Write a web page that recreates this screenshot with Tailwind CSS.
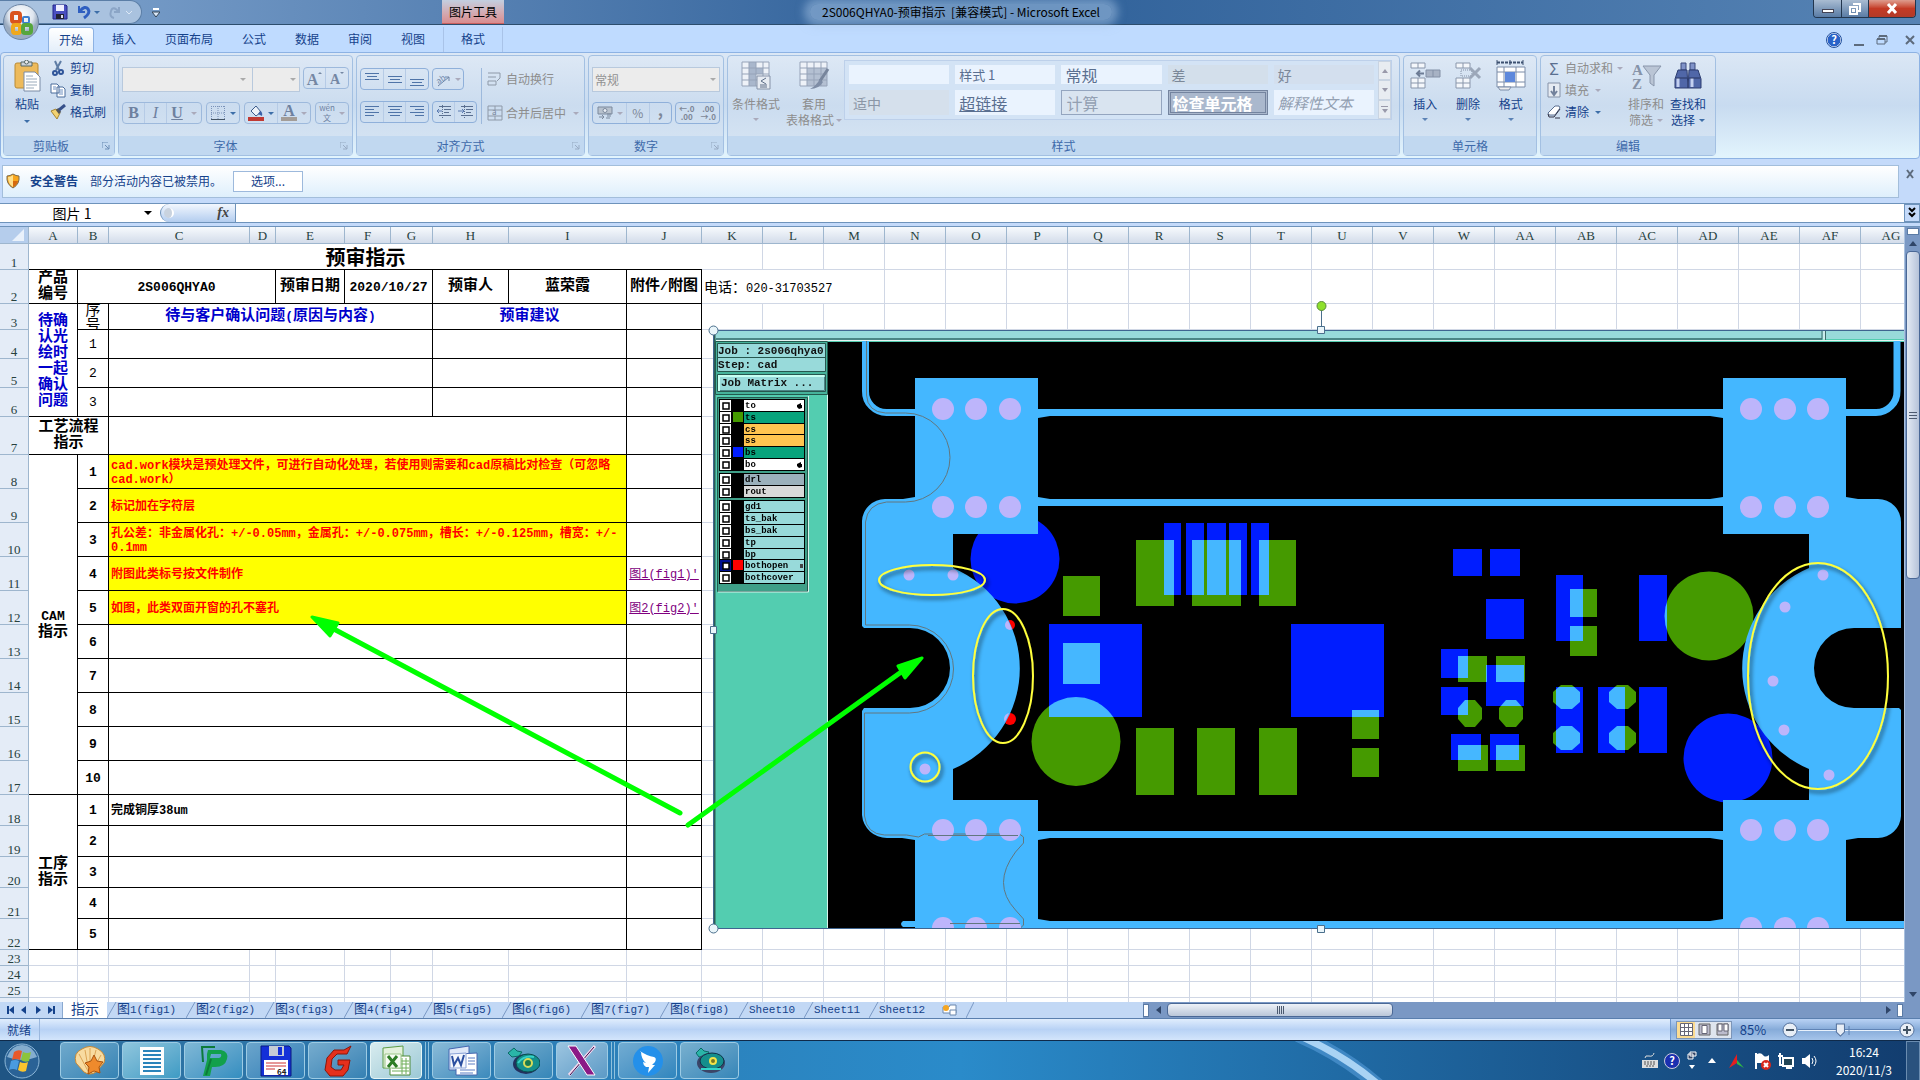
<!DOCTYPE html>
<html lang="zh-CN">
<head>
  <meta charset="UTF-8" />
  <meta name="viewport" content="width=device-width, initial-scale=1.0" />
  <title>2S006QHYA0-预审指示 [兼容模式] - Microsoft Excel</title>
  <script src="https://cdn.jsdelivr.net/npm/@tailwindcss/browser@4"></script>
</head>
<body class="h-screen overflow-hidden flex flex-col bg-[#c4dafa] font-['Noto_Sans_CJK_SC',sans-serif] text-xs leading-4 text-[#15428b] whitespace-nowrap">

  <!-- title bar -->
  <header class="relative h-[25px] shrink-0 flex bg-linear-to-r from-[#7fa3cd] via-[#2d5f98] to-[#5683b4] border-b border-[#2c4d6d]">
    <div class="flex items-center gap-2 w-[142px] pl-[52px] bg-[#a9c2df] border-y border-r border-[#5b7ea6] rounded-r-full">
      <button aria-label="保存"><svg class="size-4" viewBox="0 0 16 16"><path d="M1 1h13l1 1v13H1z" fill="#4a4fc0" stroke="#22258a"/><path d="M4 1h8v6H4z" fill="#eef"/><path d="M4 10h8v5H4z" fill="#223"/><path d="M9 11h2v3H9z" fill="#dde"/></svg></button>
      <button aria-label="撤消"><svg class="w-6 h-4" viewBox="0 0 24 16"><path d="M3 2v6h6" fill="none" stroke="#2f5fc0" stroke-width="2"/><path d="M4 7q5-6 8-2t-4 9" fill="none" stroke="#2f5fc0" stroke-width="3"/><path d="M18 7h6l-3 3z" fill="#3d6ea8"/></svg></button>
      <button aria-label="重复"><svg class="w-6 h-4" viewBox="0 0 24 16"><path d="M11 3v5H6M11 8Q5 1 3 7t3 7" fill="none" stroke="#8ba5c6" stroke-width="2"/><path d="M18 7l3 3 3-3" fill="none" stroke="#dce8f6"/></svg></button>
    </div>
    <button class="ml-1 w-5 flex items-center justify-center" aria-label="自定义快速访问工具栏"><svg class="w-2 h-3" viewBox="0 0 8 12"><path d="M1 3h6" stroke="#fff" stroke-width="2"/><path d="M0 6h8L4 11z" fill="#dce9f8" stroke="#345"/></svg></button>
    <div class="w-[276px]"></div>
    <div class="w-[62px] flex items-center justify-center bg-linear-to-b from-[#c3cfe0] to-[#d98c8f] border-b border-[#c9605f] text-black">图片工具</div>
    <h1 class="flex-1 flex items-center justify-center text-black pr-[502px]"><span class="px-3 rounded-full bg-[#a9c8e8]/50 shadow-[0_0_8px_6px_rgba(169,200,232,0.5)] whitespace-pre">2S006QHYA0-预审指示  [兼容模式] - Microsoft Excel</span></h1>
    <div class="absolute right-1 top-0 h-[18px] flex border border-t-0 border-[#22364e] rounded-b overflow-hidden">
      <button class="w-7 flex items-end justify-center pb-1 bg-linear-to-b from-[#a9bcd2] to-[#5a7ca5] border-r border-[#22364e]" aria-label="最小化"><span class="w-3 h-1 bg-white border border-[#445]"></span></button>
      <button class="w-[27px] flex items-center justify-center bg-linear-to-b from-[#a9bcd2] to-[#5a7ca5] border-r border-[#22364e]" aria-label="还原"><svg class="w-3 h-3" viewBox="0 0 12 12"><path d="M4 1h7v7H9M1 4h7v7H1zM4 7h1v1H4z" fill="none" stroke="#fff" stroke-width="2"/></svg></button>
      <button class="w-[46px] flex items-center justify-center bg-linear-to-b from-[#dd9c8e] via-[#c43a25] to-[#b23a28]" aria-label="关闭"><svg class="w-3 h-3" viewBox="0 0 12 12"><path d="M2 1l8 9M10 1L2 10" stroke="#fff" stroke-width="3"/></svg></button>
    </div>
    <button class="absolute left-[3px] top-[4px] z-10" aria-label="Office 按钮">
      <svg class="size-[37px]" viewBox="0 0 37 37">
        <defs><radialGradient id="orb" cy=".3"><stop offset="0" stop-color="#fff"/><stop offset=".7" stop-color="#dfe6ef"/><stop offset="1" stop-color="#9aabc0"/></radialGradient></defs>
        <circle cx="18" cy="18" r="17.500" fill="url(#orb)" stroke="#6b84a4"/>
        <g fill="none" stroke-width="4"><rect x="9" y="9" width="8" height="9" rx="2" stroke="#d9531e"/><rect x="20" y="13" width="6" height="6" rx="1" stroke="#3b7fd0" stroke-width="2"/><rect x="10" y="21" width="7" height="8" rx="2" stroke="#f0a81c"/><rect x="20" y="21" width="8" height="8" rx="2" stroke="#56a63c"/></g>
      </svg>
    </button>
  </header>

  <!-- ribbon tabs -->
  <nav class="h-[27px] shrink-0 flex items-end gap-[7px] pl-12 pr-1 bg-[#bfdbff] leading-6">
    <a href="#" class="px-[10px] h-[25px] bg-linear-to-b from-white to-[#e3eefa] border border-b-0 border-[#8db2e3] rounded-t">开始</a>
    <a href="#" class="px-[11px] h-[25px]">插入</a>
    <a href="#" class="px-[11px] h-[25px]">页面布局</a>
    <a href="#" class="px-[11px] h-[25px]">公式</a>
    <a href="#" class="px-[11px] h-[25px]">数据</a>
    <a href="#" class="px-[11px] h-[25px]">审阅</a>
    <a href="#" class="px-[11px] h-[25px]">视图</a>
    <a href="#" class="px-[17px] h-[25px] border-x border-[#a9c3e8]">格式</a>
    <div class="ml-auto h-[25px] flex items-center gap-3">
      <button aria-label="帮助"><svg class="size-4" viewBox="0 0 16 16"><circle cx="8" cy="8" r="7" fill="#2a63c8" stroke="#fff"/><circle cx="8" cy="8" r="7.500" fill="none" stroke="#1f4e9c"/><text x="8" y="12" text-anchor="middle" font-size="11" font-weight="700" fill="#fff">?</text></svg></button>
      <button class="w-[10px] h-3 border-b-2 border-[#5d6b7c]" aria-label="最小化窗口"></button>
      <button aria-label="还原窗口"><svg class="size-3" viewBox="0 0 12 12"><path d="M1 5h8v5H1zM3 5V2h8v6H9" fill="none" stroke="#5d6b7c"/><path d="M1 5h8M3 2h8" stroke="#5d6b7c" stroke-width="2"/></svg></button>
      <button class="ml-1" aria-label="关闭窗口"><svg class="size-3" viewBox="0 0 12 12"><path d="M2 2l8 8M10 2l-8 8" stroke="#5d6b7c" stroke-width="2"/></svg></button>
    </div>
  </nav>

  <!-- ribbon -->
  <section class="h-[107px] shrink-0 flex gap-[3px] p-[2px] bg-linear-to-b from-[#dbe7f5] via-[#c8dbf0] to-[#e2f4fd] border border-[#8db2e3] rounded">

    <div class="w-28 flex flex-col border border-[#a3c0e2] rounded bg-linear-to-b from-[#dde8f5] via-[#cbdcef] to-[#d8e6f4]">
      <div class="flex-1 flex px-2">
        <button class="w-8 flex flex-col items-center pt-1">
          <svg class="w-7 h-8" viewBox="0 0 28 32"><rect x="2" y="3" width="23" height="25" rx="2" fill="#edba5b" stroke="#b98a35"/><path d="M8 2h11v4H8z" fill="#ccd3da" stroke="#566"/><circle cx="13.500" cy="2" r="2" fill="#eee" stroke="#566"/><path d="M11 12h11l5 5v14H11z" fill="#fff" stroke="#7b8ca5"/><path d="M13 16h7M13 19h11M13 22h11M13 25h11M13 28h8" stroke="#9ab"/></svg>
          <span class="mt-1">粘贴</span>
          <span class="mt-2 border-x-[3px] border-x-transparent border-t-[3px] border-t-[#3d6ea8]"></span>
        </button>
        <div class="flex flex-col pt-px pl-2">
          <button class="h-[22px] flex items-center gap-1"><svg class="w-4 h-4" viewBox="0 0 16 16"><path d="M5 1l4 9M11 1L6 10" stroke="#5f7da5" stroke-width="2"/><circle cx="5" cy="13" r="2" fill="none" stroke="#2f559a" stroke-width="2"/><circle cx="11" cy="12" r="2" fill="none" stroke="#2f559a" stroke-width="2"/></svg>剪切</button>
          <button class="h-[22px] flex items-center gap-1"><svg class="w-4 h-4" viewBox="0 0 16 16"><path d="M1 2h6l2 2v7H1zM7 5h6l2 2v8H7z" fill="#fff" stroke="#4a6c9b"/><path d="M3 5h3M3 7h3M9 8h4M9 10h4M9 12h4" stroke="#6d8fc0"/></svg>复制</button>
          <button class="h-[22px] flex items-center gap-1"><svg class="w-4 h-4" viewBox="0 0 16 16"><path d="M1 7l5-2 4 4-3 6z" fill="#f2d272" stroke="#a58432"/><path d="M7 5l3 4" stroke="#555" stroke-width="3"/><path d="M9 6l6-5" stroke="#36508a" stroke-width="3"/></svg>格式刷</button>
        </div>
      </div>
      <div class="h-[19px] flex items-center justify-center relative bg-[#c1d8f0] text-[#3e6aaa] pr-4">剪贴板<svg class="absolute right-1 size-2" viewBox="0 0 8 8"><path d="M0 6V0h6M3 3l4 4M7 3v4H3" fill="none" stroke="#6d8db5"/></svg></div>
    </div>

    <div class="w-[235px] flex flex-col border border-[#a3c0e2] rounded bg-linear-to-b from-[#dde8f5] via-[#cbdcef] to-[#d8e6f4]">
      <div class="flex-1 flex flex-col gap-[10px] pt-[11px] px-[3px]">
        <div class="flex h-[25px]">
          <select class="w-[131px] appearance-none bg-[#ececec] border border-[#b8c9dd]" aria-label="字体"></select>
          <select class="w-[47px] appearance-none bg-[#ececec] border border-l-0 border-[#b8c9dd]" aria-label="字号"></select>
          <span class="-ml-[60px] mt-[11px] w-[60px] flex justify-between items-start pr-1"><i class="border-x-[3px] border-x-transparent border-t-[3px] border-t-[#aaa]"></i><i class="border-x-[3px] border-x-transparent border-t-[3px] border-t-[#aaa]"></i></span>
          <span class="ml-[3px] h-[22px] flex border border-[#9db9dc] rounded-sm font-['Liberation_Serif',serif] font-bold text-[#7587a3]">
            <button class="w-[22px] flex items-start justify-center pt-1 border-r border-[#b6cbe6] text-base leading-4" aria-label="增大字号">A<i class="border-x-2 border-x-transparent border-b-2 border-b-[#7587a3]"></i></button>
            <button class="w-[22px] flex items-start justify-center pt-1 text-sm leading-4" aria-label="减小字号">A<i class="border-x-2 border-x-transparent border-t-2 border-t-[#7587a3]"></i></button>
          </span>
        </div>
        <div class="flex h-[22px] gap-1 font-['Liberation_Serif',serif] text-base leading-4 text-[#6e819f]">
          <span class="w-[80px] flex border border-[#9db9dc] rounded-sm"><button class="w-[22px] border-r border-[#b6cbe6] font-bold">B</button><button class="w-[22px] border-r border-[#b6cbe6] italic">I</button><button class="flex-1 flex items-center justify-center gap-2"><u class="font-bold">U</u><i class="border-x-[3px] border-x-transparent border-t-[3px] border-t-[#aab]"></i></button></span>
          <button class="w-[34px] flex items-center justify-center gap-1 border border-[#9db9dc] rounded-sm" aria-label="边框"><svg class="size-4" viewBox="0 0 16 16"><path d="M1.500 1v13M8 1v13M14.500 1v13M1 1.500h13M1 8h13" stroke="#7a92b8" stroke-dasharray="1 1"/><path d="M1 14.500h14" stroke="#456"/></svg><i class="border-x-[3px] border-x-transparent border-t-[3px] border-t-[#3d6ea8]"></i></button>
          <span class="w-[67px] flex border border-[#9db9dc] rounded-sm">
            <button class="flex-1 flex items-center justify-center gap-1 border-r border-[#b6cbe6]" aria-label="填充颜色"><svg class="w-4 h-4" viewBox="0 0 16 16"><path d="M3 6l5-5 5 6-5 4z" fill="#eef3fa" stroke="#3a5a8a"/><path d="M12 6q3 1 2 5-2-1-4-2z" fill="#3c62a8"/><path d="M0 12h16v4H0z" fill="#c03a34"/></svg><i class="border-x-[3px] border-x-transparent border-t-[3px] border-t-[#3d6ea8]"></i></button>
            <button class="flex-1 flex items-center justify-center gap-1" aria-label="字体颜色"><span class="w-4 h-4 border-b-4 border-[#a39d98] font-bold leading-3">A</span><i class="border-x-[3px] border-x-transparent border-t-[3px] border-t-[#aab]"></i></button>
          </span>
          <button class="flex-1 flex items-center justify-center gap-1 border border-[#9db9dc] rounded-sm text-[8px] leading-[10px] font-['Noto_Sans_CJK_SC',sans-serif]"><span>wén<br>文</span><i class="border-x-[3px] border-x-transparent border-t-[3px] border-t-[#aab]"></i></button>
        </div>
      </div>
      <div class="h-[19px] flex items-center justify-center relative bg-[#c1d8f0] text-[#3e6aaa] pr-5">字体<svg class="absolute right-1 size-2" viewBox="0 0 8 8"><path d="M0 6V0h6M3 3l4 4M7 3v4H3" fill="none" stroke="#98abc4"/></svg></div>
    </div>

    <div class="w-[229px] flex flex-col border border-[#a3c0e2] rounded bg-linear-to-b from-[#dde8f5] via-[#cbdcef] to-[#d8e6f4]">
      <div class="flex-1 flex px-[3px] pt-3 text-[#8d8d8d]">
        <div class="flex flex-col gap-[11px] w-[118px]">
          <div class="flex h-[22px] gap-[3px]">
            <span class="w-[69px] flex border border-[#8fb0da] rounded-sm">
              <button class="flex-1 flex justify-center border-r border-[#b6cbe6]" aria-label="顶端对齐"><svg class="w-4 h-5" viewBox="0 0 16 20"><path d="M1 4.500h14M3 7.500h10M1 10.500h14" stroke="#4f74a8"/></svg></button>
              <button class="flex-1 flex justify-center border-r border-[#b6cbe6]" aria-label="垂直居中"><svg class="w-4 h-5" viewBox="0 0 16 20"><path d="M1 7.500h14M3 10.500h10M1 13.500h14" stroke="#4f74a8"/></svg></button>
              <button class="flex-1 flex justify-center" aria-label="底端对齐"><svg class="w-4 h-5" viewBox="0 0 16 20"><path d="M1 10.500h14M3 13.500h10M1 16.500h14" stroke="#4f74a8"/></svg></button>
            </span>
            <button class="w-8 flex items-center justify-center gap-1 border border-[#8fb0da] rounded-sm" aria-label="方向"><svg class="size-4" viewBox="0 0 16 16"><text x="1" y="11" font-size="8" fill="#6f86a8" transform="rotate(-35 6 8)">ab</text><path d="M3 15L14 6M14 6h-4M14 6v4" fill="none" stroke="#6f86a8"/></svg><i class="border-x-[3px] border-x-transparent border-t-[3px] border-t-[#aab]"></i></button>
          </div>
          <div class="flex h-[22px] gap-[3px]">
            <span class="w-[69px] flex border border-[#8fb0da] rounded-sm">
              <button class="flex-1 flex justify-center border-r border-[#b6cbe6]" aria-label="左对齐"><svg class="w-4 h-5" viewBox="0 0 16 20"><path d="M1 4.500h14M1 7.500h9M1 10.500h14M1 13.500h9" stroke="#4f74a8"/></svg></button>
              <button class="flex-1 flex justify-center border-r border-[#b6cbe6]" aria-label="居中"><svg class="w-4 h-5" viewBox="0 0 16 20"><path d="M1 4.500h14M3 7.500h10M1 10.500h14M3 13.500h10" stroke="#4f74a8"/></svg></button>
              <button class="flex-1 flex justify-center" aria-label="右对齐"><svg class="w-4 h-5" viewBox="0 0 16 20"><path d="M1 4.500h14M6 7.500h9M1 10.500h14M6 13.500h9" stroke="#4f74a8"/></svg></button>
            </span>
            <span class="w-[45px] flex border border-[#8fb0da] rounded-sm">
              <button class="flex-1 flex justify-center border-r border-[#b6cbe6]" aria-label="减少缩进"><svg class="w-4 h-5" viewBox="0 0 16 20"><path d="M3 4.500h12M8 7.500h7M8 10.500h5M3 13.500h12" stroke="#5a6f90"/><path d="M6 9H1M3 7L1 9l2 2" fill="none" stroke="#5a7ab0"/><path d="M6.500 3v13" stroke="#5a6f90" stroke-dasharray="1 1"/></svg></button>
              <button class="flex-1 flex justify-center" aria-label="增加缩进"><svg class="w-4 h-5" viewBox="0 0 16 20"><path d="M3 4.500h12M8 7.500h7M8 10.500h5M3 13.500h12" stroke="#5a6f90"/><path d="M0 9h6M4 7l2 2-2 2" fill="none" stroke="#5a7ab0"/><path d="M6.500 3v13" stroke="#5a6f90" stroke-dasharray="1 1"/></svg></button>
            </span>
          </div>
        </div>
        <div class="h-14 border-l border-[#9db9dc] pl-[5px] ml-[3px] flex flex-col justify-between">
          <button class="h-[22px] flex items-center gap-[3px]"><svg class="size-4" viewBox="0 0 16 16"><path d="M1 2h12M1 6h8M1 10h8v4H1zM13 2v5l-3 3" fill="none" stroke="#8e99a8"/></svg>自动换行</button>
          <button class="h-[22px] flex items-center gap-[3px]"><svg class="size-4" viewBox="0 0 16 16"><path d="M1 1h14v14H1zM1 5h14M1 11h14M8 1v4M8 11v4" fill="none" stroke="#8e99a8"/><text x="5" y="10" font-size="8" fill="#78859a">a</text></svg>合并后居中<i class="ml-1 border-x-[3px] border-x-transparent border-t-[3px] border-t-[#aab]"></i></button>
        </div>
      </div>
      <div class="h-[19px] flex items-center justify-center relative bg-[#c1d8f0] text-[#3e6aaa] pr-5">对齐方式<svg class="absolute right-1 size-2" viewBox="0 0 8 8"><path d="M0 6V0h6M3 3l4 4M7 3v4H3" fill="none" stroke="#98abc4"/></svg></div>
    </div>

    <div class="w-[136px] flex flex-col border border-[#a3c0e2] rounded bg-linear-to-b from-[#dde8f5] via-[#cbdcef] to-[#d8e6f4]">
      <div class="flex-1 flex flex-col gap-[10px] pt-[11px] px-[3px] text-[#7d8797]">
        <div class="flex items-center h-[25px]">
          <select class="w-full h-full appearance-none bg-[#ececec] border border-[#b8c9dd] px-[2px] text-[#929292]" aria-label="数字格式"><option>常规</option></select>
          <i class="-ml-[10px] border-x-[3px] border-x-transparent border-t-[3px] border-t-[#aaa]"></i>
        </div>
        <div class="flex h-[22px] gap-[3px]">
          <span class="w-20 flex border border-[#8fb0da] rounded-sm">
            <button class="w-[34px] flex items-center justify-center gap-1 border-r border-[#b6cbe6]" aria-label="会计数字格式"><svg class="size-4" viewBox="0 0 16 16"><path d="M1 2h14v7H1z" fill="#b8c2ce" stroke="#7b899d"/><circle cx="8" cy="5.500" r="2" fill="#e8edf3" stroke="#7b899d"/><path d="M10 9h4M10 11h4M9 13h4M2 12h4M5 10l2 2-2 2" fill="none" stroke="#7b899d"/></svg><i class="border-x-[3px] border-x-transparent border-t-[3px] border-t-[#aab]"></i></button>
            <button class="flex-1 border-r border-[#b6cbe6]">%</button><button class="flex-1 font-bold text-base leading-3 pb-2">,</button>
          </span>
          <span class="flex-1 flex border border-[#8fb0da] rounded-sm text-[8px] leading-2 font-bold"><button class="flex-1">←.0<br>.00</button><button class="flex-1">.00<br>→.0</button></span>
        </div>
      </div>
      <div class="h-[19px] flex items-center justify-center relative bg-[#c1d8f0] text-[#3e6aaa] pr-5">数字<svg class="absolute right-1 size-2" viewBox="0 0 8 8"><path d="M0 6V0h6M3 3l4 4M7 3v4H3" fill="none" stroke="#98abc4"/></svg></div>
    </div>

    <div class="w-[673px] flex flex-col border border-[#a3c0e2] rounded bg-linear-to-b from-[#dde8f5] via-[#cbdcef] to-[#d8e6f4]">
      <div class="flex-1 flex pt-[4px] text-[#8d8d8d]">
        <button class="w-[56px] flex flex-col items-center">
          <svg class="w-8 h-8" viewBox="0 0 32 32"><path d="M2 2h27v24H2z" fill="#eef2f8"/><path d="M9 2h7v24H9zM9 8h14v6H9z" fill="#a9b7cc"/><path d="M2 2h27v24H2zM9 2v24M16 2v24M23 2v24M2 8h27M2 14h27M2 20h27" fill="none" stroke="#96a3b8"/><path d="M17 16h13v13H17z" fill="#e6ebf2" stroke="#8592a8"/><path d="M26 18l-5 3 5 3M20 25h7M20 27h7" fill="none" stroke="#5e6f88"/></svg>
          <span class="mt-1">条件格式</span><span class="mt-[6px] border-x-[3px] border-x-transparent border-t-[3px] border-t-[#aab]"></span>
        </button>
        <button class="w-[60px] flex flex-col items-center">
          <svg class="w-8 h-8" viewBox="0 0 32 32"><path d="M2 2h27v24H2z" fill="#eef2f8"/><path d="M9 8h20v18H9z" fill="#b4c0d2"/><path d="M2 2h27v24H2zM9 2v24M16 2v24M23 2v24M2 8h27M2 14h27M2 20h27" fill="none" stroke="#96a3b8"/><path d="M30 9l-8 12" stroke="#77859c" stroke-width="3"/><path d="M22 19l3 3q-4 7-13 7 6-3 10-10z" fill="#7e8da6"/></svg>
          <span class="mt-1">套用</span><span class="flex items-center gap-[2px]">表格格式<i class="border-x-[3px] border-x-transparent border-t-[3px] border-t-[#aab]"></i></span>
        </button>
        <div class="h-[60px] flex flex-1 mr-[7px] border border-[#bdd0ea] bg-[#d3e3f5]">
          <div class="flex-1 grid grid-cols-5 gap-x-[6px] gap-y-[6px] p-[4px] text-sm leading-4 text-[#7b8899]">
            <button class="bg-[#eaf3fe]" aria-label="默认"></button>
            <button class="bg-[#eaf3fe] text-left px-1 text-[13px] text-[#5a6f90]">样式 1</button>
            <button class="bg-[#eaf3fe] text-left px-1 text-base leading-4 text-[#5a6f90]">常规</button>
            <button class="bg-[#d3dfeb] text-left px-1">差</button>
            <button class="bg-[#d3dfee] text-left px-1">好</button>
            <button class="bg-[#d5e0ec] text-left px-1 text-[#8b96a6]">适中</button>
            <button class="bg-[#eaf3fe] text-left px-1 text-base leading-4 underline text-[#5a6f90]">超链接</button>
            <button class="bg-[#d9e4f0] text-left px-1 text-base leading-4 border border-[#94a5bf] text-[#93a0b2]">计算</button>
            <button class="bg-[#aab8cd] text-left px-[2px] text-base leading-4 font-bold border-3 border-double border-[#74849f] text-white">检查单元格</button>
            <button class="bg-[#eaf3fe] text-left px-1 text-[15px] leading-4 italic text-[#93a0b2]">解释性文本</button>
          </div>
          <div class="w-[13px] flex flex-col bg-[#e8ecf1]">
            <button class="flex-1 flex items-center justify-center border border-[#c9d4e2]" aria-label="上一行"><i class="border-x-[3px] border-x-transparent border-b-4 border-b-[#99a]"></i></button>
            <button class="flex-1 flex items-center justify-center border border-[#c9d4e2]" aria-label="下一行"><i class="border-x-[3px] border-x-transparent border-t-4 border-t-[#99a]"></i></button>
            <button class="flex-1 flex flex-col gap-[2px] items-center justify-center border border-[#c9d4e2]" aria-label="其他"><i class="w-[7px] border-t border-[#99a]"></i><i class="border-x-[3px] border-x-transparent border-t-4 border-t-[#99a]"></i></button>
          </div>
        </div>
      </div>
      <div class="h-[19px] flex items-center justify-center bg-[#c1d8f0] text-[#3e6aaa]">样式</div>
    </div>

    <div class="w-[134px] flex flex-col border border-[#a3c0e2] rounded bg-linear-to-b from-[#dde8f5] via-[#cbdcef] to-[#d8e6f4]">
      <div class="flex-1 flex pr-1 pt-1">
        <button class="flex-1 flex flex-col items-center">
          <svg class="w-8 h-8" viewBox="0 0 32 32"><path d="M2 3h14v5H2zM2 18h14v10H2zM2 23h14M9 3v5M9 18v10" fill="#f4f7fb" stroke="#8996ab"/><path d="M17 10h14v7H17z" fill="#a7b2c4" stroke="#8390a6"/><path d="M24 10v7" stroke="#8390a6"/><path d="M15 13.500H8M11 10.500l-3 3 3 3" fill="none" stroke="#6d7c95" stroke-width="2"/></svg>
          <span class="mt-1">插入</span><span class="mt-[6px] border-x-[3px] border-x-transparent border-t-[3px] border-t-[#5b82b5]"></span>
        </button>
        <button class="flex-1 flex flex-col items-center">
          <svg class="w-8 h-8" viewBox="0 0 32 32"><path d="M4 3h14v5H4zM4 18h14v10H4zM4 23h14M11 3v5M11 18v10" fill="#f4f7fb" stroke="#8996ab"/><path d="M9 10h11v6H9z" fill="none" stroke="#8390a6" stroke-dasharray="1 1"/><path d="M18 8l10 10M28 8L18 18" stroke="#9ba7b9" stroke-width="3"/></svg>
          <span class="mt-1">删除</span><span class="mt-[6px] border-x-[3px] border-x-transparent border-t-[3px] border-t-[#5b82b5]"></span>
        </button>
        <button class="flex-1 flex flex-col items-center">
          <svg class="w-8 h-8" viewBox="0 0 32 32"><path d="M2 0v5M28 0v5M15 0v5" stroke="#3c5070"/><path d="M2 2.500h26" stroke="#3c5070" stroke-width="2" stroke-dasharray="3 1"/><path d="M2 7h28v20H2z" fill="#fff"/><path d="M2 7h28v20H2zM9 7v20M21 7v20M2 12h28M2 22h28" fill="none" stroke="#7b8ca8"/><path d="M10 12h10v10H10z" fill="#5d88dc"/><path d="M3 27h13l-2 3H5z" fill="#eee" stroke="#7b8ca8"/></svg>
          <span class="mt-1">格式</span><span class="mt-[6px] border-x-[3px] border-x-transparent border-t-[3px] border-t-[#5b82b5]"></span>
        </button>
      </div>
      <div class="h-[19px] flex items-center justify-center bg-[#c1d8f0] text-[#3e6aaa]">单元格</div>
    </div>

    <div class="w-44 flex flex-col border border-[#a3c0e2] rounded bg-linear-to-b from-[#dde8f5] via-[#cbdcef] to-[#d8e6f4]">
      <div class="flex-1 flex pl-[6px] pr-1 text-[#8d8d8d]">
        <div class="flex flex-col w-[78px] pt-px">
          <button class="h-[22px] flex items-center gap-1"><span class="w-[14px] text-base leading-4 text-[#5a6f90]">Σ</span>自动求和<i class="border-x-[3px] border-x-transparent border-t-[3px] border-t-[#aab]"></i></button>
          <button class="h-[22px] flex items-center gap-1"><svg class="w-[14px] h-4" viewBox="0 0 14 16"><path d="M1 1h12v14H1z" fill="#e6ebf2" stroke="#8592a8"/><path d="M7 4v8M4 9l3 4 3-4" fill="none" stroke="#73829c" stroke-width="2"/></svg>填充<i class="ml-[2px] border-x-[3px] border-x-transparent border-t-[3px] border-t-[#aab]"></i></button>
          <button class="h-[22px] flex items-center gap-1 text-[#15428b]"><svg class="w-[14px] h-4" viewBox="0 0 14 16"><path d="M8 2h4l1 2-5 7H2l-1-2z" fill="#fff" stroke="#5a6f90"/><path d="M1 10l1 3h5l6-8M8 14h5" fill="none" stroke="#334"/></svg>清除<i class="ml-[2px] border-x-[3px] border-x-transparent border-t-[3px] border-t-[#3d6ea8]"></i></button>
        </div>
        <button class="w-[42px] flex flex-col items-center pt-1">
          <svg class="w-8 h-8" viewBox="0 0 32 32"><path d="M13 6h18l-7 9v11l-4-3v-8z" fill="#bac5d5" stroke="#8996ab"/><text x="2" y="15" font-size="15" font-weight="700" font-family="Liberation Serif" fill="#8693a8">A</text><text x="2" y="29" font-size="15" font-weight="700" font-family="Liberation Serif" fill="#8693a8">Z</text></svg>
          <span class="mt-1">排序和</span><span class="flex items-center gap-1">筛选<i class="border-x-[3px] border-x-transparent border-t-[3px] border-t-[#aab]"></i></span>
        </button>
        <button class="w-[42px] flex flex-col items-center pt-1 text-[#15428b]">
          <svg class="w-8 h-8" viewBox="0 0 32 32"><path d="M9 3h5v7H9zM18 3h5v7h-5z" fill="#7f92c8" stroke="#3a4a7c"/><path d="M6 10h9l1 18H3V19zM17 10h9l3 9v9H16z" fill="#5067a8" stroke="#2d3d70"/><path d="M6 18v9M20 18v9" stroke="#c3d0f0" stroke-width="3"/><path d="M4 18h11M17 18h11" stroke="#26345f"/></svg>
          <span class="mt-1">查找和</span><span class="flex items-center gap-1">选择<i class="border-x-[3px] border-x-transparent border-t-[3px] border-t-[#3d6ea8]"></i></span>
        </button>
      </div>
      <div class="h-[19px] flex items-center justify-center bg-[#c1d8f0] text-[#3e6aaa]">编辑</div>
    </div>
  </section>

  <!-- security message -->
  <section class="h-[33px] mt-[6px] ml-[2px] shrink-0 flex">
    <div class="flex-1 flex items-center pl-[3px] pb-px bg-linear-to-b from-white to-[#deeffc] border border-[#a3bedb]">
      <svg class="w-[14px] h-4" viewBox="0 0 14 16"><path d="M7 1q3 2 6 2 1 8-6 12Q0 11 1 3q3 0 6-2z" fill="#f8a51c" stroke="#7b6a4c"/><path d="M7 2v12Q2 11 2 4q3 0 5-2z" fill="#ffdf8a"/><path d="M7 8h5q-1 4-5 6z" fill="#d6690d"/></svg>
      <b class="ml-[10px]">安全警告</b>
      <span class="ml-3 w-[143px]">部分活动内容已被禁用。</span>
      <button class="w-[70px] h-[21px] bg-white border border-[#9db9dc]">选项...</button>
    </div>
    <button class="w-[21px] flex items-start justify-center pt-[3px]" aria-label="关闭消息栏"><svg class="size-3" viewBox="0 0 12 12"><path d="M3 2l6 8M9 2l-6 8" stroke="#5d6b7c" stroke-width="2"/></svg></button>
  </section>

  <!-- formula bar -->
  <section class="h-5 mt-[5px] mb-[3px] shrink-0 flex bg-white border-y border-[#6e93bb]">
    <input type="text" value="图片 1" aria-label="名称框" class="w-36 text-center text-sm text-black font-['Noto_Sans_CJK_SC',sans-serif]" />
    <span class="w-4 flex items-center"><i class="border-x-4 border-x-transparent border-t-4 border-t-black"></i></span>
    <button class="w-[76px] flex items-center justify-between pl-[3px] pr-[6px] rounded-l-full border-l border-r border-[#6e93bb] bg-linear-to-b from-[#f2f7fe] to-[#b3cdef] font-['Liberation_Serif',serif] italic font-bold text-sm text-[#444]" aria-label="插入函数"><i class="size-[10px] rounded-full bg-[#c9d3df] border-r-2 border-white"></i>fx</button>
    <input type="text" aria-label="编辑栏" class="flex-1" />
    <button class="w-4 border border-[#6e93bb] bg-[#c4dafa] flex items-center justify-center" aria-label="展开编辑栏"><svg class="w-2 h-3" viewBox="0 0 8 12"><path d="M1 1l3 3 3-3M1 6l3 3 3-3" fill="none" stroke="#000" stroke-width="2"/></svg></button>
  </section>

  <!-- worksheet -->
  <main class="flex-1 min-h-0 flex border-t border-[#6e93bb]">
    <div class="relative flex-1 overflow-hidden bg-white">
      <table class="table-fixed border-separate border-spacing-0 w-[1921px] text-black">
        <colgroup id="cols"></colgroup>
        <thead id="head"></thead>
        <tbody id="rows"></tbody>
      </table>

      <!-- inserted picture and annotations; units are page pixels -->
      <svg class="absolute left-0 top-0 w-[1904px] h-[775px]" viewBox="0 227 1904 775" role="img" aria-label="线路板图片">
        <defs>
          <clipPath id="pic"><rect x="713" y="330" width="1191" height="598"/></clipPath>
          <clipPath id="bulge"><circle cx="910" cy="668" r="109"/></clipPath>
          <filter id="sh" x="-20%" y="-20%" width="140%" height="150%"><feDropShadow dx="2" dy="3" stdDeviation="2" flood-opacity=".7"/></filter>
        </defs>
        <g clip-path="url(#pic)">
          <rect x="713" y="330" width="1191" height="598" fill="#53cdb0"/>
          <rect x="713" y="330" width="1191" height="9" fill="#98dada"/>
          <path d="M713 330.500h1191" stroke="#4c7390"/>
          <path d="M716 339h1106" stroke="#4b8585" stroke-width="2"/>
          <path d="M716 340.500h1188" stroke="#e6f5f3"/>
          <path d="M1822 331v8M1825.500 331v9" stroke="#3c6b6b"/>
          <path d="M1824 331v9" stroke="#fff"/>
          <path d="M714.500 330v598" stroke="#2d5c55" stroke-width="2"/>
          <path d="M827.500 341v587" stroke="#d7f5ec"/>
          <rect x="828" y="342" width="1076" height="586"/>

          <!-- bottom side pads -->
          <g fill="#001dff">
            <circle cx="1015" cy="559" r="44.500"/><circle cx="1728" cy="758" r="44.500"/>
            <path d="M1164 523h17v72h-17zM1186 523h18v72h-18zM1207 523h19v72h-19zM1229 523h18v72h-18zM1251 523h18v72h-18z"/>
            <path d="M1049 624h93v93h-93zM1291 624h93v93h-93z"/>
            <path d="M1453 549h29v27h-29zM1490 549h30v27h-30zM1486 599h38v40h-38zM1556 575h27v66h-27zM1639 575h28v66h-28z"/>
            <path d="M1441 649h27v29h-27zM1441 687h27v28h-27zM1486 665h38v41h-38zM1451 734h30v26h-30zM1490 734h29v26h-29z"/>
            <path d="M1556 687h27v66h-27zM1598 687h27v66h-27zM1639 687h28v66h-28z"/>
          </g>
          <!-- top side pads, light blue where both overlap -->
          <g fill="#459a00" class="mix-blend-plus-lighter">
            <circle cx="1076" cy="741.500" r="44.500"/><circle cx="1709" cy="616" r="44.500"/>
            <path d="M1063 576h37v40h-37zM1136 540h38v66h-38zM1192 540h49v66h-49zM1259 540h37v66h-37zM1063 643h37v41h-37z"/>
            <path d="M1136 728h38v67h-38zM1197 728h38v67h-38zM1259 728h38v67h-38zM1352 710h27v29h-27zM1352 748h27v29h-27z"/>
            <path d="M1570 589h27v28h-27zM1570 626h27v30h-27zM1458 656h29v26h-29zM1496 656h29v26h-29zM1458 745h30v26h-30zM1496 745h29v26h-29z"/>
            <path d="M1465 700h10l7 8v11l-7 8h-10l-7-8v-11zM1506 700h10l7 8v11l-7 8h-10l-7-8v-11z"/>
            <path d="M1561 685h11l8 7v10l-8 7h-11l-8-7v-10zM1617 685h11l8 7v10l-8 7h-11l-8-7v-10zM1561 726h11l8 7v10l-8 7h-11l-8-7v-10zM1617 726h11l8 7v10l-8 7h-11l-8-7v-10z"/>
          </g>
          <circle cx="1010" cy="625" r="5" fill="#f00"/><circle cx="1010" cy="719" r="6" fill="#f00"/>

          <!-- board frame -->
          <g fill="#44b7ff">
            <path d="M1038 409h685v9l-13-2h-660l-12 2zM1038 497l12 2h660l13-2v9h-685zM1038 831h685v9l-13-2h-660l-12 2zM1038 919l12 2h660l13-2v9h-685zM1846 921h58v7h-58zM915 921h-12q-4 3 0 6h12z"/>
            <path d="M915 378h123v156h-85v34A109 109 0 0 1 953 769v31h85v128H915V840l-13-2h-15A25 25 0 0 1 862 815V711l2-3h46a40 40 0 0 0 0-80h-46l-2-2V521A23 23 0 0 1 885 499h18l12-2z"/>
            <path d="M1723 378h123v119l12 2h20A23 23 0 0 1 1901 522v106h-47a40 40 0 0 0 0 80h45l2 2v106A23 23 0 0 1 1878 838l-20 0-12 2v88h-123V800h86v-31A109 109 0 0 1 1809 568v-34h-86z"/>
          </g>
          <g fill="none" stroke="#44b7ff" stroke-width="7"><path d="M865.500 341v50a21 21 0 0 0 21 21.500h29"/><path d="M1897 341v50a21 21 0 0 1-21 21.500h-31"/></g>

          <g fill="none" stroke="#62777f">
            <path d="M866.500 341v54q1 17 19 18h20a44 44 0 0 1 0 89h-19q-19 2-21 20v103h44a44 44 0 0 1 0 88h-45v103q2 18 20 19h22l12 2 6-3h95l4 3v6l-8 9q-24 32 0 58l8 9v6l-4 4h-72l-20 3"/>
          </g>

          <g fill="#bdb5fb">
            <circle cx="943" cy="409" r="11"/><circle cx="976" cy="409" r="11"/><circle cx="1010" cy="409" r="11"/>
            <circle cx="943" cy="507" r="11"/><circle cx="976" cy="507" r="11"/><circle cx="1010" cy="507" r="11"/>
            <circle cx="943" cy="830" r="11"/><circle cx="976" cy="830" r="11"/><circle cx="1010" cy="830" r="11"/>
            <circle cx="943" cy="928" r="11"/><circle cx="976" cy="928" r="11"/><circle cx="1010" cy="928" r="11"/>
            <circle cx="1751" cy="409" r="11"/><circle cx="1785" cy="409" r="11"/><circle cx="1818" cy="409" r="11"/>
            <circle cx="1751" cy="507" r="11"/><circle cx="1785" cy="507" r="11"/><circle cx="1818" cy="507" r="11"/>
            <circle cx="1751" cy="830" r="11"/><circle cx="1785" cy="830" r="11"/><circle cx="1818" cy="830" r="11"/>
            <circle cx="1751" cy="928" r="11"/><circle cx="1785" cy="928" r="11"/><circle cx="1818" cy="928" r="11"/>
            <circle cx="909" cy="575" r="5.500"/><circle cx="953" cy="575" r="5.500"/><circle cx="925" cy="769" r="5.500"/>
            <circle cx="1823" cy="575" r="5.500"/><circle cx="1785" cy="607" r="5.500"/><circle cx="1773" cy="681" r="5.500"/><circle cx="1784" cy="730" r="5.500"/><circle cx="1829" cy="775" r="5.500"/>
            <g clip-path="url(#bulge)"><circle cx="1010" cy="625" r="5"/><circle cx="1010" cy="719" r="6"/></g>
          </g>
          <path d="M928 835.500h90M950 923.500h70" stroke="#62777f"/>

          <g fill="none" stroke="#ffff3c" stroke-width="2" filter="url(#sh)">
            <ellipse cx="932" cy="580" rx="53" ry="15"/><ellipse cx="1003" cy="676" rx="30" ry="67"/><circle cx="925" cy="767" r="14.500"/><ellipse cx="1818" cy="676" rx="70" ry="113"/>
          </g>

          <!-- job panel -->
          <g font-family="Liberation Mono" font-size="11" font-weight="700" fill="#111">
            <path d="M715.500 341.500h112v53h-112z" fill="#46b39b" stroke="#235a4e"/>
            <path d="M717.500 343.500h108v28h-108zM717.500 357.500h108" fill="#98dada" stroke="#27574f"/>
            <path d="M717.500 374.500h108v17h-108z" fill="#98dada" stroke="#27574f"/>
            <path d="M719 391v-15h105" fill="none" stroke="#c6fff2" stroke-width="2"/>
            <path d="M720 390.500h104.500V377" fill="none" stroke="#4b8585"/>
            <text x="718" y="354">Job : 2s006qhya0</text>
            <text x="718" y="368">Step: cad</text>
            <text x="721" y="386">Job Matrix ...</text>
            <path d="M717.500 397.500h90v194h-90z" fill="#3f9f88" stroke="#255a50"/>
            <path d="M808.500 396v196H718" fill="none" stroke="#d7f5ec"/>
          </g>
          <g id="layers" font-family="Liberation Mono" font-size="9" font-weight="700" fill="#000"></g>
        </g>

        <!-- selection frame -->
        <path d="M713.500 928V330.500H1904M713 928.500h1191" fill="none" stroke="#3f6590"/>
        <g fill="#e9f5fa" stroke="#4b6f8c">
          <path d="M1321.500 326v-16" />
          <circle cx="713.500" cy="330.500" r="4.500"/><circle cx="713.500" cy="928.500" r="4.500"/>
          <path d="M1317.500 326.500h7v7h-7zM1317.500 925.500h7v7h-7zM710.500 626.500h6v7h-6z"/>
          <circle cx="1321.500" cy="306" r="4.500" fill="#8ee02c" stroke="#5a8a3a"/>
        </g>

        <g stroke="#0f0" stroke-width="5" stroke-linecap="round" fill="#0f0">
          <path d="M680 813L330 627M688 825L904 670"/>
          <path d="M312 617l26 6-8 13zM922 658l-24 8 7 12z" stroke-width="3" stroke-linejoin="round"/>
        </g>
      </svg>
    </div>

    <!-- vertical scroll bar -->
    <div class="w-4 shrink-0 flex flex-col items-center bg-[#7a98c4] border-l border-[#a9c0de]">
      <i class="w-3 h-[7px] mt-px bg-white border border-[#5b7ba5]"></i>
      <button class="h-4 flex items-center" aria-label="向上滚动"><i class="border-x-4 border-x-transparent border-b-[5px] border-b-[#2f4568]"></i></button>
      <div class="w-[14px] h-[328px] flex flex-col items-center justify-center gap-[2px] bg-linear-to-r from-[#e3eaf4] to-[#b6c3d9] border border-[#4a6896] rounded-sm"><i class="w-2 border-t border-[#4c5a70]"></i><i class="w-2 border-t border-[#4c5a70]"></i><i class="w-2 border-t border-[#4c5a70]"></i></div>
      <button class="mt-auto h-4 flex items-center" aria-label="向下滚动"><i class="border-x-4 border-x-transparent border-t-[5px] border-t-[#2f4568]"></i></button>
    </div>
  </main>

  <!-- sheet tabs -->
  <section class="h-[17px] shrink-0 flex bg-[#c2d8f5] border-b border-[#5a7fae]">
    <div class="flex-1 flex font-['Liberation_Mono','Noto_Sans_CJK_SC',monospace] text-[11px] text-[#15428b]">
      <div class="w-[63px] flex items-center justify-around px-1 border-r border-[#8aa9d0]">
        <button aria-label="第一张"><svg class="w-2 h-2" viewBox="0 0 8 8"><path d="M1 0v8" stroke="#15428b" stroke-width="2"/><path d="M7 0v8L2 4z" fill="#15428b"/></svg></button>
        <button aria-label="上一张"><svg class="w-2 h-2" viewBox="0 0 8 8"><path d="M6 0v8L1 4z" fill="#15428b"/></svg></button>
        <button aria-label="下一张"><svg class="w-2 h-2" viewBox="0 0 8 8"><path d="M2 0v8l5-4z" fill="#15428b"/></svg></button>
        <button aria-label="最后一张"><svg class="w-2 h-2" viewBox="0 0 8 8"><path d="M7 0v8" stroke="#15428b" stroke-width="2"/><path d="M1 0v8l5-4z" fill="#15428b"/></svg></button>
      </div>
      <a href="#" class="w-[44px] bg-white pl-2 text-sm leading-4">指示</a>
      <div id="tabs" class="flex"></div>
      <button class="flex items-center gap-2" aria-label="插入工作表"><svg class="w-4 h-3 ml-2" viewBox="0 0 16 12"><path d="M1 3h6l1-2h6v8H1z" fill="#fff" stroke="#6a87ad"/><path d="M8 6h6v5H8z" fill="#fff" stroke="#6a87ad"/><circle cx="4" cy="4" r="3" fill="#f5a623"/></svg><svg class="w-2 h-4" viewBox="0 0 8 16"><path d="M0 16L8 0" stroke="#7a98c4"/></svg></button>
    </div>
    <div class="w-[777px] flex items-center bg-[#7a98c4]">
      <i class="w-[6px] h-[13px] bg-white border border-[#5b7ba5]"></i>
      <button class="w-[18px] flex justify-center" aria-label="向左滚动"><i class="border-y-4 border-y-transparent border-r-[5px] border-r-[#2f4568]"></i></button>
      <div class="w-[226px] h-[14px] flex items-center justify-center gap-px bg-linear-to-b from-[#eef2f8] to-[#bac6d8] border border-[#4a6896] rounded-sm"><i class="h-2 border-l border-[#4c5a70]"></i><i class="h-2 border-l border-[#4c5a70]"></i><i class="h-2 border-l border-[#4c5a70]"></i><i class="h-2 border-l border-[#4c5a70]"></i></div>
      <button class="ml-auto w-[18px] flex justify-center" aria-label="向右滚动"><i class="border-y-4 border-y-transparent border-l-[5px] border-l-[#2f4568]"></i></button>
      <i class="w-[6px] h-[13px] mr-[17px] bg-white border border-[#5b7ba5]"></i>
    </div>
  </section>

  <!-- status bar -->
  <footer class="h-[21px] shrink-0 flex bg-linear-to-b from-[#e0edfd] via-[#b8d2f5] to-[#d3e5fb]">
    <div class="w-10 flex items-center pl-[7px] border-r border-[#9bb8de]">就绪</div>
    <div class="flex-1"></div>
    <div class="w-[250px] flex items-center pl-[5px] bg-linear-to-b from-[#b9d2f4] via-[#86abd9] to-[#a5c4ea] border-l border-[#6f97cd]">
      <div class="flex h-[18px] border border-[#7c95b8] bg-[#dfe5ee]">
        <button class="w-[18px] flex items-center justify-center bg-[#fcdc92]" aria-label="普通"><svg class="size-[13px]" viewBox="0 0 13 13"><path d="M.5.5h12v12H.5zM4.500 0v13M8.500 0v13M0 4.500h13M0 8.500h13" fill="#fff" stroke="#667"/></svg></button>
        <button class="w-[18px] flex items-center justify-center" aria-label="页面布局视图"><svg class="size-[13px]" viewBox="0 0 13 13"><path d="M1 1h11v11H1z" fill="#bbc" stroke="#666"/><path d="M4 2.500h5v8H4z" fill="#fff" stroke="#667"/></svg></button>
        <button class="w-[18px] flex items-center justify-center" aria-label="分页预览"><svg class="size-[13px]" viewBox="0 0 13 13"><path d="M1 1h11v11H1z" fill="#bbc" stroke="#666"/><path d="M2 1h4v7H2zM8 1h4v7H8z" fill="#fff" stroke="#667"/></svg></button>
      </div>
      <button class="w-[50px] pr-2 text-[13px]">85%</button>
      <button aria-label="缩小"><svg class="size-4" viewBox="0 0 16 16"><circle cx="8" cy="8" r="7" fill="#e8eef6" stroke="#54719c"/><path d="M4 8h8" stroke="#456" stroke-width="2"/></svg></button>
      <label class="flex-1 flex items-center h-4"><svg class="w-full h-4" viewBox="0 0 100 16" preserveAspectRatio="none"><path d="M0 8.500h100" stroke="#e8f1fc" /><path d="M0 7.500h100" stroke="#5f83b5"/><path d="M50.500 4v9" stroke="#5f83b5"/><path d="M38 2h8v8l-4 4-4-4z" fill="#e8eef6" stroke="#54719c"/></svg><input type="range" min="10" max="190" value="85" aria-label="显示比例" class="w-0 opacity-0" /></label>
      <button class="mr-[5px]" aria-label="放大"><svg class="size-4" viewBox="0 0 16 16"><circle cx="8" cy="8" r="7" fill="#e8eef6" stroke="#54719c"/><path d="M4 8h8M8 4v8" stroke="#456" stroke-width="2"/></svg></button>
    </div>
  </footer>

  <!-- task bar -->
  <footer class="relative h-10 shrink-0 flex bg-linear-to-r from-[#2d6d9c] via-[#2a8bca] to-[#123c6e] border-t border-[#0f2a4a] text-white overflow-hidden">
    <svg class="absolute left-[1290px] top-0 w-40 h-10" viewBox="0 0 160 40"><path d="M8 -6q46 20 82 52" fill="none" stroke="#5fa6e4" stroke-width="14" opacity=".5"/><path d="M10 -5q46 20 80 50" fill="none" stroke="#b5dcfa" stroke-width="7" opacity=".9"/></svg>
    <button class="w-[60px] pr-4 flex justify-center items-center bg-[#1f5584]" aria-label="开始菜单">
      <svg class="size-9" viewBox="0 0 36 36"><circle cx="18" cy="18" r="17" fill="#2a6296" stroke="#8db7d8"/><path d="M3 14Q8 2 18 2t15 12Q18 20 3 14z" fill="#9cc0dc" opacity=".8"/><path d="M10 9q4-3 8-1l-2 9q-4-2-8 0z" fill="#e8592a"/><path d="M19 9q4 2 8 0l-2 9q-4 2-8-1z" fill="#8cc43c"/><path d="M7 18q4-2 8 0l-2 9q-4-2-8 0z" fill="#4a9be0"/><path d="M16 19q4 2 8 0l-2 9q-4 2-8-1z" fill="#fbc52e"/></svg>
    </button>
    <div class="flex gap-[3px] py-px">
      <button class="w-[59px] flex items-center justify-center rounded-sm border border-[#9ccbe4] bg-linear-to-br from-[#6fa9cc] to-[#3583b4]" aria-label="贝壳"><svg class="size-8" viewBox="0 0 32 32"><path d="M10 27L2 18Q-1 8 8 4q8-5 16 0 9 5 6 14l-8 9q-6 4-12 0z" fill="#f8dba0" stroke="#c98a36"/><path d="M15 28L5 9M15 28L11 5M16 28V3M16 28l6-23M17 28L27 10" stroke="#dca455"/><path d="M20 10l3 6 6 1-4 5 1 6-6-2-6 3 1-7-4-4 6-2z" fill="#ef8a2c" stroke="#a9530f"/></svg></button>
      <button class="w-[59px] flex items-center justify-center rounded-sm border border-[#9ccbe4] bg-linear-to-br from-[#8fc6dd] to-[#3d9bc4]" aria-label="文档"><svg class="size-8" viewBox="0 0 32 32"><path d="M4 2h24v28H4z" fill="#fdfdfd"/><path d="M7 6h18M7 10h18M7 14h18M7 18h18M7 22h18M7 26h18" stroke="#2a83ba" stroke-width="2"/></svg></button>
      <button class="w-[59px] flex items-center justify-center rounded-sm border border-[#9ccbe4] bg-linear-to-br from-[#7fb8d6] to-[#338ec0]" aria-label="PCB"><svg class="size-8" viewBox="0 0 32 32"><path d="M9 9h4l-1 4h9q3-1 2-4H9l1-4h13q8 2 6 9-2 8-12 8h-3l-2 9H5l4-16z" fill="#12a04c"/><path d="M17 2H4l1 15M13 14l-5 16" fill="none" stroke="#0c7a3a" stroke-width="2"/></svg></button>
      <button class="w-[59px] flex items-center justify-center rounded-sm border border-[#9ccbe4] bg-linear-to-br from-[#6ba5cc] to-[#2f7fb6]" aria-label="Total Commander 64"><svg class="size-8" viewBox="0 0 32 32"><path d="M1 1h28l2 2v28H1z" fill="#1430d8" stroke="#0a1a80"/><path d="M9 1h15v10H9z" fill="#c5ccd6"/><path d="M18 2h4v8h-4z" fill="#1430d8"/><path d="M4 15h24v15H4z" fill="#fff"/><path d="M6 18h20M6 21h20M6 24h9" stroke="#c33"/><text x="17" y="30" font-size="8" font-weight="700" fill="#222">64</text></svg></button>
      <button class="w-[59px] flex items-center justify-center rounded-sm border border-[#9ccbe4] bg-linear-to-br from-[#76acce] to-[#3581b3]" aria-label="Genesis"><svg class="size-8" viewBox="0 0 32 32"><path d="M29 1l-4 8H15l-5 5-1 8 4 3h6l3-5h-6v-5h12l-2 10-5 6H8l-5-6 2-12 7-8h10z" fill="#e5301c" stroke="#8d1408"/></svg></button>
      <button class="w-[52px] flex items-center justify-center rounded-sm border border-[#e6f6f6] bg-linear-to-br from-[#d8ecef] to-[#9cc9d6]" aria-label="Excel"><svg class="size-8" viewBox="0 0 32 32"><path d="M3 3l20-2v22H3z" fill="#e3f1dc" stroke="#5d9c46"/><path d="M14 11h16v19H10v-7" fill="#fff" stroke="#4c8a38"/><path d="M12 23h17M12 26h17M22 13v16M26 13v16M21 16h8M21 19h8" stroke="#6fae58"/><path d="M5 9h16v14H5z" fill="#f7fbf3" stroke="#9cc68a"/><path d="M8 11l9 11M17 11L8 22" stroke="#2e7d26" stroke-width="3"/></svg></button>
      <span class="w-1 border-x border-[#8fc1dd]"></span>
      <button class="w-[59px] flex items-center justify-center rounded-sm border border-[#9ccbe4] bg-linear-to-br from-[#8abbd8] to-[#3b8abc]" aria-label="Word"><svg class="size-8" viewBox="0 0 32 32"><path d="M3 4l20-3v24H3z" fill="#dfe8f8" stroke="#4466b0"/><path d="M12 9l19-1v22H10v-6" fill="#fff" stroke="#4466b0"/><path d="M22 13h7M22 16h7M22 19h7M14 25h15M14 28h13" stroke="#5a7cc4"/><path d="M4 9l16-1v15H4z" fill="#f4f7fd" stroke="#8ca4d8"/><path d="M6 11l2 9 4-7 3 7 3-10" fill="none" stroke="#2b4fa0" stroke-width="2"/></svg></button>
      <button class="w-[59px] flex items-center justify-center rounded-sm border border-[#9ccbe4] bg-linear-to-br from-[#78b0cf] to-[#3586b8]" aria-label="CAM 1"><svg class="size-8" viewBox="0 0 32 32"><path d="M0 8l6-5 3 3 5 1-3 4-7 1z" fill="#2ab5a8" stroke="#0b6a66"/><ellipse cx="18" cy="19" rx="13" ry="10" fill="#23305e"/><ellipse cx="20" cy="18" rx="12" ry="9" fill="#158f8c" stroke="#0a4f50"/><path d="M10 18q6-8 16-6" stroke="#35d4c8" stroke-width="2" fill="none"/><circle cx="20" cy="18" r="4" fill="#1a7a50" stroke="#d7dc5a" stroke-width="2"/></svg></button>
      <button class="w-[52px] flex items-center justify-center rounded-sm border border-[#9ccbe4] bg-linear-to-br from-[#9cc5e0] to-[#5c9ac6]" aria-label="X 服务器"><svg class="size-8" viewBox="0 0 32 32"><path d="M29 1L3 30" stroke="#f4d9ee" stroke-width="3"/><path d="M28 2L4 30" stroke="#3a0a4a"/><path d="M2 1h8l19 29h-8z" fill="#8b1a86" stroke="#fff"/></svg></button>
      <span class="w-1 border-x border-[#8fc1dd]"></span>
      <button class="w-[59px] flex items-center justify-center rounded-sm border border-[#9ccbe4] bg-linear-to-br from-[#72acd2] to-[#2f86be]" aria-label="钉钉"><svg class="size-8" viewBox="0 0 32 32"><circle cx="16" cy="16" r="15" fill="#2490ea"/><path d="M8 6q7 5 14 6 3 1 1 5l-3 3h3l-7 8 1-6h-3q-3-2-3-5l3 1q-5-4-5-12z" fill="#fff"/></svg></button>
      <button class="w-[59px] flex items-center justify-center rounded-sm border border-[#9ccbe4] bg-linear-to-br from-[#78b0cf] to-[#3586b8]" aria-label="CAM 2"><svg class="size-8" viewBox="0 0 32 32"><path d="M2 8l5-5 3 3 5 1-3 4-7 1z" fill="#2ab5a8" stroke="#0b6a66"/><ellipse cx="17" cy="18" rx="14" ry="10" fill="#3b4568"/><ellipse cx="18" cy="16" rx="12" ry="8" fill="#158f8c" stroke="#12304a"/><circle cx="19" cy="16" r="3" fill="#7a7a20" stroke="#f2e34a" stroke-width="2"/><path d="M7 24h20" stroke="#35d4c8" stroke-width="2"/></svg></button>
    </div>
    <div class="ml-auto flex items-center gap-2">
      <div class="flex items-center gap-[6px] pr-1">
        <svg class="size-4" viewBox="0 0 16 16"><path d="M3 5q0-3 4-2t5-3" fill="none" stroke="#ddd"/><path d="M0 7h16v8H0z" fill="#ddd"/><path d="M2 9h12M2 11h12M4 13h8" stroke="#555" stroke-dasharray="2 1"/></svg>
        <svg class="size-4" viewBox="0 0 16 16"><circle cx="8" cy="8" r="7.500" fill="#1a2fb0" stroke="#ccd"/><text x="8" y="12" text-anchor="middle" font-size="11" font-weight="700" fill="#fff">?</text></svg>
        <svg class="w-3 h-5" viewBox="0 0 12 20"><path d="M4 1h6v4H4zM2 3h5v5H2z" fill="#346" stroke="#fff"/><path d="M3 14h6l-3 4z" fill="#fff"/></svg>
        <svg class="w-4 h-3" viewBox="0 0 16 12"><path d="M8 3l4 5H4z" fill="#fff"/></svg>
        <svg class="size-5" viewBox="0 0 20 20"><path d="M3 17L11 3v9z" fill="#e41f1f"/><path d="M11 9l7 8-7-4z" fill="#2fb844"/></svg>
        <svg class="size-5" viewBox="0 0 20 20"><path d="M4 2v16" stroke="#fff" stroke-width="2"/><path d="M5 3q4-2 6 1t6 0v8H5z" fill="#fff"/><circle cx="14" cy="14" r="5" fill="#d9281c"/><path d="M12 12l4 4M16 12l-4 4" stroke="#fff" stroke-width="2"/></svg>
        <svg class="w-4 h-4" viewBox="0 0 16 16"><path d="M5 5h10v8H5z" fill="#245" stroke="#fff" stroke-width="2"/><path d="M8 15h6M2 0v12h3M0 3h5" stroke="#fff" stroke-width="2" fill="none"/></svg>
        <svg class="w-4 h-4 ml-[2px]" viewBox="0 0 16 16"><path d="M0 5h3l5-4v14l-5-4H0z" fill="#fff"/><path d="M10 5q2 3 0 6M12 3q4 5 0 10" fill="none" stroke="#fff"/></svg>
      </div>
      <time class="w-[68px] text-center text-xs leading-[18px]">16:24<br>2020/11/3</time>
      <button class="w-[14px] h-10 border border-[#6a8cb0] bg-[#2a527e]" aria-label="显示桌面"></button>
    </div>
  </footer>

  <script>
    const widths = [29, 49, 31, 141, 26, 69, 46, 42, 76, 118, 75].concat(Array(20).fill(61));
    const names = 'A B C D E F G H I J K L M N O P Q R S T U V W AA AB AC AD AE AF AG'.split(' ');

    document.getElementById('cols').innerHTML = widths.map(w => `<col style="width:${w}px">`).join('');
    document.getElementById('head').innerHTML = '<tr style="height:17px">' +
      '<th class="bg-[#b5cdec] border-r border-b border-[#9eb6ce] p-0"><svg class="ml-auto mr-1 size-3" viewBox="0 0 12 12"><path d="M12 0v12H0z" fill="#e9f1fb"/></svg></th>' +
      names.map(n => `<th class="bg-linear-to-b from-[#f7fafd] to-[#d3dcea] border-r border-b border-[#9eb6ce] p-0 pt-[2px] h-[17px] font-['Liberation_Serif',serif] font-normal text-[13px] leading-[14px] text-[#27413e]">${n}</th>`).join('') + '</tr>';

    const box = "border-r border-b border-black p-0 text-center font-['Liberation_Mono','Noto_Sans_CJK_SC',monospace] ";
    const big = box + 'pt-px font-bold text-[15px] leading-4 ';
    const blue = box + 'pt-[3px] font-bold text-[15px] leading-4 text-[#0000cc] ';
    const num = box + 'pt-[2px] font-bold text-[13px] leading-4';
    const note = "border-r border-b border-black pb-0 pt-[2px] px-[2px] text-left font-['Liberation_Mono','Noto_Sans_CJK_SC',monospace] font-bold text-xs leading-[14px] ";
    const red = note + 'bg-[#ffff00] text-[#ff0000]';
    const link = box + 'pt-[2px] text-xs leading-4 text-[#800080]';

    const td = (text, cls, cs = 1, rs = 1) => `<td class="${cls}" colspan="${cs}" rowspan="${rs}">${text}</td>`;

    const cam = [
      'cad.work模块是预处理文件，可进行自动化处理，若使用则需要和cad原稿比对检查（可忽略<br>cad.work）',
      '标记加在字符层',
      '孔公差：非金属化孔：+/-0.05mm，金属孔：+/-0.075mm，槽长：+/-0.125mm，槽宽：+/-<br>0.1mm',
      '附图此类标号按文件制作',
      '如图，此类双面开窗的孔不塞孔'
    ];
    const figs = { 3: "图1(fig1)'", 4: "图2(fig2)'" };

    const rows = [];
    rows.push([26, td('预审指示', "border-b border-black p-0 pt-px text-center font-bold text-[20px] leading-6", 10)]);
    rows.push([34,
      td('产品<br>编号', big) + td('2S006QHYA0', num, 3) + td('预审日期', big) + td('2020/10/27', num, 2) +
      td('预审人', big) + td('蓝荣霞', big) + td('附件<span class="text-[13px]">/</span>附图', big)]);
    rows.push([26,
      td('待确<br>认光<br>绘时<br>一起<br>确认<br>问题', blue, 1, 4) +
      td('<div class="h-[25px] overflow-hidden text-[15px] leading-[15px]">序<br>号</div>', box) +
      td('待与客户确认问题<span class="text-[13px]">(</span>原因与内容<span class="text-[13px]">)</span>', big + 'text-[#0000cc]', 5) + td('预审建议', big + 'text-[#0000cc]', 2) + td('', box)]);
    for (let i = 1; i <= 3; i++) rows.push([29, td(i, box + 'pt-[2px] text-[13px]') + td('', box, 5) + td('', box, 2) + td('', box)]);
    rows.push([38, td('工艺流程<br>指示', big, 2) + td('', box, 7) + td('', box)]);
    for (let i = 0; i < 10; i++) rows.push([34,
      (i === 0 ? td('<span class="text-[13px]">CAM</span><br>指示', big, 1, 10) : '') +
      td(i + 1, num) + td(cam[i] || '', cam[i] ? red : note, 7) +
      td(figs[i] ? `<a href="#" class="underline">${figs[i]}</a>` : '', link)]);
    for (let i = 0; i < 5; i++) rows.push([31,
      (i === 0 ? td('工序<br>指示', big, 1, 5) : '') + td(i + 1, num) + td(i === 0 ? '完成铜厚38um' : '', note, 7) + td('', box)]);

    const empty = 'border-r border-b border-[#d0d7e5] p-0';
    for (let i = 0; i < 4; i++) rows.push([16, td('', empty).repeat(10)]);

    document.getElementById('rows').innerHTML = rows.map(([h, cells], i) => {
      let rest = td('', empty).repeat(20);
      if (i === 1) rest = td('<div class="w-0 pl-[2px] overflow-visible">电话：<span class="text-xs">020-31703527</span></div>', "border-b border-[#d0d7e5] p-0 pt-[2px] text-sm font-['Liberation_Mono','Noto_Sans_CJK_SC',monospace]") +
        td('', 'border-b border-[#d0d7e5] p-0') + td('', empty).repeat(18);
      // row 26 is only a sliver above the sheet tabs
      const label = i < 25 ? i + 1 : '';
      return `<tr style="height:${h}px"><th class="bg-[#e4ecf7] border-r border-b border-[#9eb6ce] p-0 align-bottom font-['Liberation_Serif',serif] font-normal text-[13px] leading-[13px] text-[#27413e]">${label}</th>${cells}${rest}</tr>`;
    }).join('');

    const sheets = ['1', '2', '3', '4', '5', '6', '7', '8'].map(n => `<span class="text-[13px]">图</span>${n}(fig${n})`);
    document.getElementById('tabs').innerHTML = sheets.map(s => [s, 'w-[79px]']).concat(['Sheet10', 'Sheet11', 'Sheet12'].map(s => [s, 'w-[65px]']))
      .map(([s, w]) => `<a href="#" class="${w} flex items-center leading-4"><svg class="w-[10px] h-4 shrink-0" viewBox="0 0 10 16"><path d="M0 16L9 0" stroke="#7a98c4"/></svg><span>${s}</span></a>`).join('');

    // layer list: name, row colour, display colour, top
    const layers = [
      ['to', '#ffffff', '', 400], ['ts', '#08a37c', '#459a00', 412], ['cs', '#ffc550', '', 424], ['ss', '#ffc550', '', 435], ['bs', '#08a37c', '#001dff', 447], ['bo', '#ffffff', '', 459],
      ['drl', '#9bb0bb', '', 474], ['rout', '#d9d9d9', '', 486],
      ['gd1', '#98dada', '', 501], ['ts_bak', '#98dada', '', 513], ['bs_bak', '#98dada', '', 525], ['tp', '#98dada', '', 537], ['bp', '#98dada', '', 549], ['bothopen', '#98dada', '#ff0000', 560], ['bothcover', '#98dada', '', 572]
    ];
    document.getElementById('layers').innerHTML = layers.map(([n, bg, c, y]) =>
      `<rect x="719" y="${y - 1}" width="86" height="13"/>
       <rect x="720" y="${y}" width="11" height="11" fill="${n === 'bothopen' ? '#001090' : '#fff'}"/>
       <rect x="723" y="${y + 3}" width="6" height="6" fill="#fff" stroke="#000" stroke-width="1.500"/>
       ${c ? `<rect x="733" y="${y}" width="10" height="10" fill="${c}"/>` : ''}
       <rect x="744" y="${y}" width="60" height="11" fill="${bg}"/>
       <text x="745" y="${y + 8}">${n}</text>
       ${bg === '#ffffff' ? `<path d="M797 ${y + 5}l4-2v2h1v3l-3 1-2-2z"/>` : ''}
       ${n === 'bothopen' ? `<rect x="800" y="${y + 4}" width="3" height="4" fill="#444"/>` : ''}`).join('');
  </script>
</body>
</html>
